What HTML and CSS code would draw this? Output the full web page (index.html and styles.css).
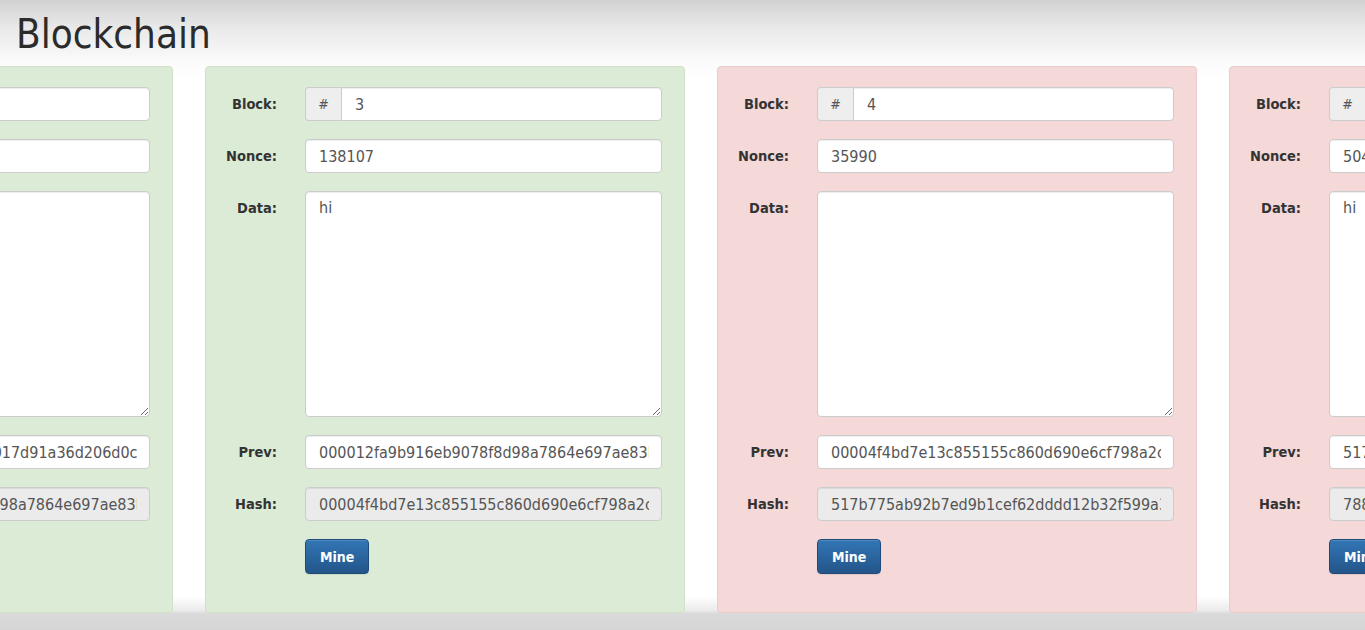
FILE: index.html
```html
<!DOCTYPE html>
<html lang="en">
<head>
<meta charset="utf-8">
<title>Blockchain</title>
<link rel="stylesheet" href="styles.css">
</head>
<body>
<header class="page-header">
  <h1 class="title">Blockchain</h1>
</header>
<main class="chain">
  <section class="block block-ok">
    <div class="label">Block:</div>
    <div class="input-group"><span class="addon">#</span><input class="field field-group" type="text" value="2"></div>
    <div class="label">Nonce:</div>
    <input class="field" type="text" value="72608">
    <div class="label label-top">Data:</div>
    <textarea class="field area"></textarea>
    <div class="label">Prev:</div>
    <input class="field" type="text" value="0000a3c2b8e3f41d5a0e7017d91a36d206d0c8e5f1a2b3c4d5e6f7a8b9c0d1e2">
    <div class="label">Hash:</div>
    <input class="field" type="text" disabled value="000012fa9b916eb9078f8d98a7864e697ae83b9c1d4e2f7a0b5c8d3e6f91a2b4">
    <button class="mine" type="button">Mine</button>
  </section>
  <section class="block block-ok">
    <div class="label">Block:</div>
    <div class="input-group"><span class="addon">#</span><input class="field field-group" type="text" value="3"></div>
    <div class="label">Nonce:</div>
    <input class="field" type="text" value="138107">
    <div class="label label-top">Data:</div>
    <textarea class="field area">hi</textarea>
    <div class="label">Prev:</div>
    <input class="field" type="text" value="000012fa9b916eb9078f8d98a7864e697ae83b9c1d4e2f7a0b5c8d3e6f91a2b4">
    <div class="label">Hash:</div>
    <input class="field" type="text" disabled value="00004f4bd7e13c855155c860d690e6cf798a2c41b0e9d3f57a8612ec5b4f09d7">
    <button class="mine" type="button">Mine</button>
  </section>
  <section class="block block-bad">
    <div class="label">Block:</div>
    <div class="input-group"><span class="addon">#</span><input class="field field-group" type="text" value="4"></div>
    <div class="label">Nonce:</div>
    <input class="field" type="text" value="35990">
    <div class="label label-top">Data:</div>
    <textarea class="field area"></textarea>
    <div class="label">Prev:</div>
    <input class="field" type="text" value="00004f4bd7e13c855155c860d690e6cf798a2c41b0e9d3f57a8612ec5b4f09d7">
    <div class="label">Hash:</div>
    <input class="field" type="text" disabled value="517b775ab92b7ed9b1cef62dddd12b32f599a3e40c8d71b6f2a59e1c04d7b83a">
    <button class="mine" type="button">Mine</button>
  </section>
  <section class="block block-bad">
    <div class="label">Block:</div>
    <div class="input-group"><span class="addon">#</span><input class="field field-group" type="text" value="5"></div>
    <div class="label">Nonce:</div>
    <input class="field" type="text" value="50422">
    <div class="label label-top">Data:</div>
    <textarea class="field area">hi</textarea>
    <div class="label">Prev:</div>
    <input class="field" type="text" value="517b775ab92b7ed9b1cef62dddd12b32f599a3e40c8d71b6f2a59e1c04d7b83a">
    <div class="label">Hash:</div>
    <input class="field" type="text" disabled value="788c1f0e4a9b2d63e57f0a18c9b4d2e6f3a7058b1c9e4d0f2a6b83e5c7d19f04">
    <button class="mine" type="button">Mine</button>
  </section>
</main>
</body>
</html>
```
FILE: styles.css
```css
html, body {
  margin: 0;
  padding: 0;
  height: 630px;
  overflow: hidden;
}
body {
  font-family: "DejaVu Sans Condensed", "DejaVu Sans", Verdana, sans-serif;
  color: #333;
  background: linear-gradient(to bottom, #d2d2d2 0px, #e9e9e9 28px, #fbfbfb 62px, #ffffff 80px, #ffffff 596px, #ececec 610px, #d9d9d9 614px, #d6d6d6 630px);
}
.page-header {
  padding: 10px 0 0 16px;
  height: 56px;
  box-sizing: border-box;
}
.title {
  margin: 0;
  font-family: "DejaVu Sans Condensed", "DejaVu Sans", sans-serif;
  font-weight: normal;
  font-size: 40px;
  line-height: 48px;
  color: #2b2b2b;
}
.chain {
  display: flex;
  gap: 32px;
  margin-left: -307px;
  margin-top: 10px;
}
.block {
  flex: 0 0 480px;
  box-sizing: border-box;
  width: 480px;
  height: 547px;
  border-radius: 4px;
  padding: 20px 21px 37px 0;
  display: grid;
  grid-template-columns: 99px 357px;
  grid-auto-rows: max-content;
  row-gap: 18px;
  column-gap: 0;
}
.block-ok {
  background: #dcebd5;
  border: 1px solid #d0e0c8;
}
.block-bad {
  background: #f5d8d8;
  border: 1px solid #ebcccc;
}
.label {
  text-align: right;
  padding-right: 28px;
  font-family: "DejaVu Sans Condensed", "DejaVu Sans", sans-serif;
  font-weight: bold;
  font-size: 14.5px;
  line-height: 34px;
  color: #333;
}
.field {
  box-sizing: border-box;
  width: 100%;
  height: 34px;
  margin: 0;
  padding: 6px 12px 6px 13px;
  font-family: "DejaVu Sans Condensed", "DejaVu Sans", sans-serif;
  font-size: 16px;
  line-height: 20px;
  color: #555;
  background: #fff;
  border: 1px solid #ccc;
  border-radius: 4px;
  box-shadow: inset 0 1px 1px rgba(0, 0, 0, 0.075);
  outline: none;
}
.field:disabled {
  background: #ebebeb;
  color: #555;
  -webkit-text-fill-color: #555;
  opacity: 1;
}
.area {
  height: 226px;
  resize: vertical;
  display: block;
}
.input-group {
  display: flex;
  height: 34px;
}
.addon {
  box-sizing: border-box;
  flex: 0 0 36px;
  height: 34px;
  display: flex;
  align-items: center;
  justify-content: center;
  background: #eee;
  border: 1px solid #ccc;
  border-right: 0;
  border-radius: 4px 0 0 4px;
  font-size: 14px;
  color: #555;
}
.field-group {
  flex: 1;
  border-radius: 0 4px 4px 0;
}
.mine {
  grid-column: 2;
  justify-self: start;
  height: 35px;
  padding: 0 14px;
  font-family: "DejaVu Sans Condensed", "DejaVu Sans", sans-serif;
  font-weight: bold;
  font-size: 14px;
  color: #fff;
  background: linear-gradient(to bottom, #3276b5 0%, #23558a 100%);
  border: 1px solid #1f4b7a;
  border-radius: 4px;
  box-shadow: inset 0 1px 0 rgba(255, 255, 255, 0.15), 0 1px 1px rgba(0, 0, 0, 0.08);
  cursor: pointer;
}
```
